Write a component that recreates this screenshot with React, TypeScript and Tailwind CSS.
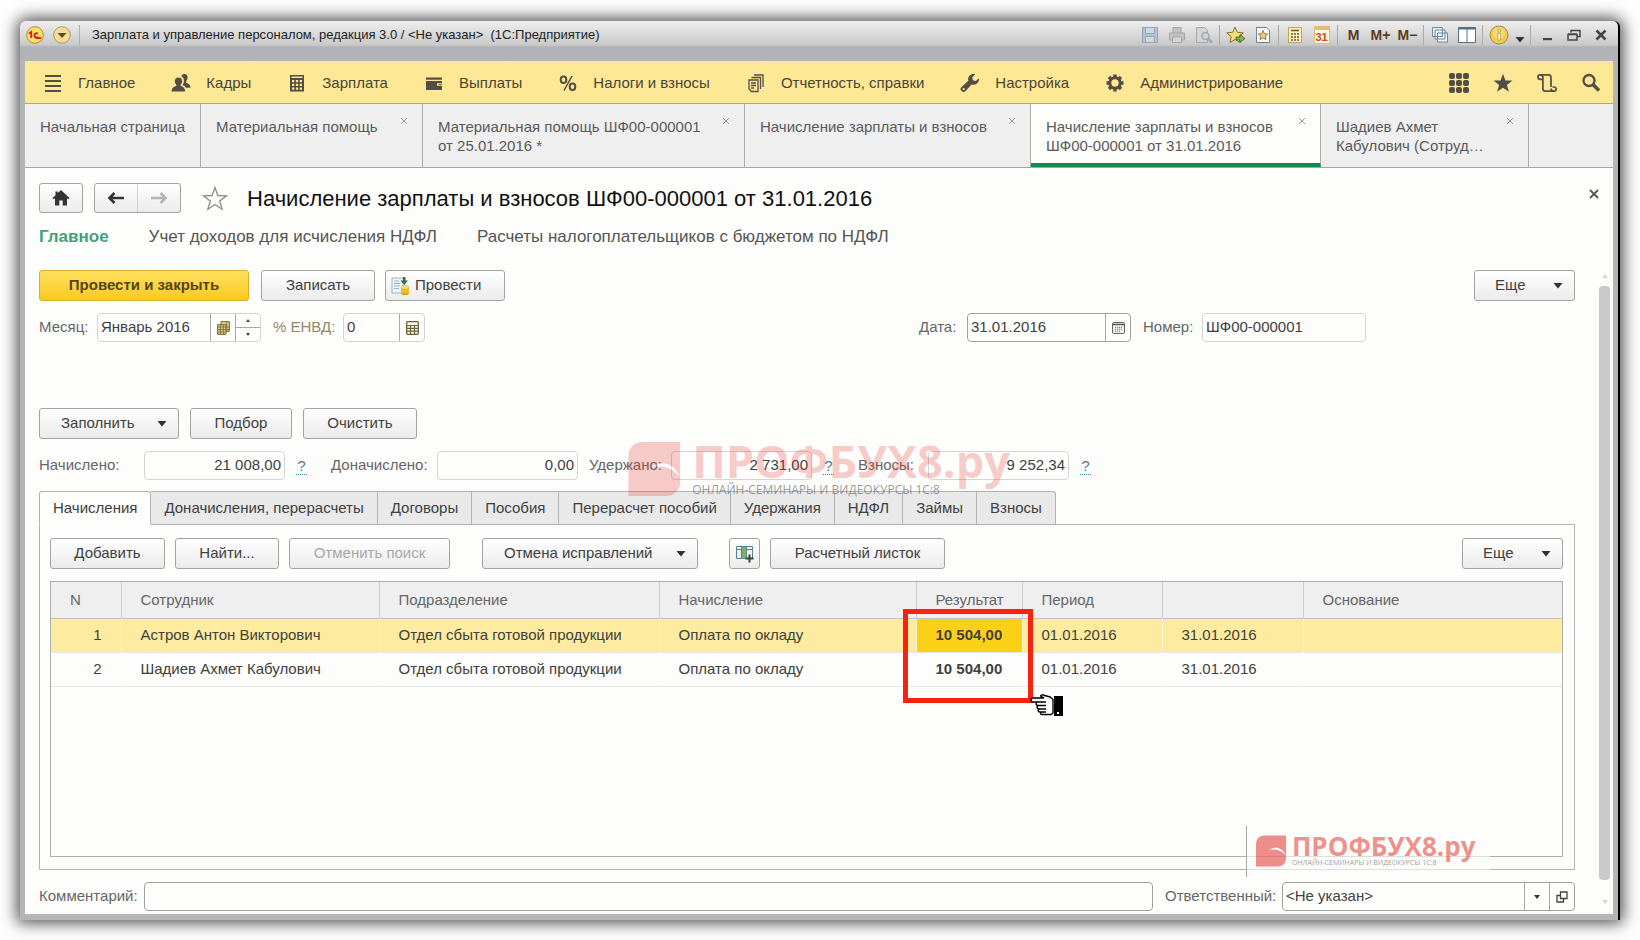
import type { ReactNode } from 'react';
import clsx from 'clsx';

const menu = [
  { label: 'Главное', icon: <MenuIcon /> },
  { label: 'Кадры', icon: <PeopleIcon /> },
  { label: 'Зарплата', icon: <CalculatorIcon /> },
  { label: 'Выплаты', icon: <WalletIcon /> },
  { label: 'Налоги и взносы', icon: <PercentIcon /> },
  { label: 'Отчетность, справки', icon: <ReportsIcon /> },
  { label: 'Настройка', icon: <WrenchIcon /> },
  { label: 'Администрирование', icon: <GearIcon /> },
];

const windows = [
  { lines: ['Начальная страница'], width: 'w-[176px]', closable: false },
  { lines: ['Материальная помощь'], width: 'w-[222px]', closable: true },
  { lines: ['Материальная помощь ШФ00-000001', 'от 25.01.2016 *'], width: 'w-[322px]', closable: true },
  { lines: ['Начисление зарплаты и взносов'], width: 'w-[286px]', closable: true },
  { lines: ['Начисление зарплаты и взносов', 'ШФ00-000001 от 31.01.2016'], width: 'w-[290px]', closable: true, active: true },
  { lines: ['Шадиев Ахмет', 'Кабулович (Сотруд…'], width: 'w-[208px]', closable: true },
];

const sections = [
  'Начисления',
  'Доначисления, перерасчеты',
  'Договоры',
  'Пособия',
  'Перерасчет пособий',
  'Удержания',
  'НДФЛ',
  'Займы',
  'Взносы',
];

const rows = [
  { n: 1, name: 'Астров Антон Викторович', result: '10 504,00' },
  { n: 2, name: 'Шадиев Ахмет Кабулович', result: '10 504,00' },
];

function MenuIcon() {
  return (
    <svg viewBox="0 0 20 20" className="size-5" fill="#544d44">
      <path d="M2 2h16v2H2zM2 7h16v2H2zM2 12h16v2H2zM2 17h16v2H2z" />
    </svg>
  );
}

function PeopleIcon() {
  return (
    <svg viewBox="0 0 20 20" className="size-5" fill="#544d44">
      <path d="M13.2 1c2.200 0 3.400 1.500 3.400 3.500 0 1.700-.8 3-1.500 3.800v1.500c1.800.7 4.400 1.500 4.400 4.900h-4.700c-.6-1.500-1.900-2.200-3.300-2.800 1.200-1.500 1.600-3.400 1.400-5.100-.2-1.600-1-2.700-2.600-3.300C10.900 1.700 11.900 1 13.2 1z" />
      <path d="M7.500 4.500c2.400 0 3.700 1.500 3.700 3.600 0 1.600-.8 3-1.600 3.800v1.200c1.900.8 4.500 1.400 4.500 5.400H.6c0-4 2.700-4.600 4.800-5.400v-1.200C4.600 11.100 3.800 9.700 3.800 8.100c0-2.100 1.300-3.600 3.700-3.600z" />
    </svg>
  );
}

function CalculatorIcon() {
  return (
    <svg viewBox="0 0 20 20" className="size-5">
      <path d="M3 2h14v16.500H3z" fill="#544d44" />
      <path d="M4.500 3.500h11V5h-11z" fill="#fde896" />
      <path d="M5 7h2.300v2.300H5zM8.900 7h2.300v2.300H8.900zM12.700 7H15v2.300h-2.300zM5 10.700h2.300V13H5zM8.900 10.700h2.300V13H8.900zM12.700 10.700H15V13h-2.300zM5 14.400h2.300v2.300H5zM8.900 14.400h2.300v2.300H8.900zM12.700 14.400H15v2.300h-2.300z" fill="#fde896" />
    </svg>
  );
}

function WalletIcon() {
  return (
    <svg viewBox="0 0 20 20" className="size-5" fill="#544d44">
      <path d="M2 4.500h16v2.200H2z" />
      <path d="M2 8h16v2.300h-5v2.400h5V17H2z" />
      <path d="M14.500 11.200H18v.7h-3.500z" />
    </svg>
  );
}

function PercentIcon() {
  return (
    <svg viewBox="0 0 20 20" className="size-5" fill="none" stroke="#544d44" strokeWidth="2">
      <ellipse cx="5.500" cy="6.800" rx="2.800" ry="3.200" />
      <ellipse cx="14.500" cy="13.800" rx="2.800" ry="3.200" />
      <path d="M14 3 6 17.500" strokeWidth="1.500" />
    </svg>
  );
}

function ReportsIcon() {
  return (
    <svg viewBox="0 0 20 20" className="size-5" fill="none" stroke="#544d44" strokeWidth="1.300">
      <path d="M3 7h9v11.500H5.500L3 16z" />
      <path d="M5.500 4.500h9V16M8 2h9v12" />
      <path d="M5 10h5M5 12.500h5M5 15h3" />
    </svg>
  );
}

function WrenchIcon() {
  return (
    <svg viewBox="0 0 20 20" className="size-5" fill="#544d44">
      <path d="M18.800 5.200 15.800 8l-2.900-.8-.7-2.900 2.900-2.900c-2-.7-4.300-.2-5.700 1.300-1.300 1.400-1.600 3.300-1 5L1.600 14a2.600 2.600 0 0 0 0 3.900 2.800 2.800 0 0 0 4 0l6-6.400c1.900.6 4 .2 5.500-1.200 1.500-1.300 2.200-3.200 1.700-5.100zM3.700 17.200a1.100 1.100 0 1 1 0-2.200 1.100 1.100 0 0 1 0 2.200z" />
    </svg>
  );
}

function GearIcon() {
  return (
    <svg viewBox="0 0 20 20" className="size-5" fill="none" stroke="#544d44">
      <circle cx="10" cy="10" r="5.200" strokeWidth="3" />
      <path d="M10 1.500v3M10 15.500v3M1.500 10h3M15.500 10h3M4 4l2 2M14 14l2 2M4 16l2-2M14 6l2-2" strokeWidth="3.400" />
    </svg>
  );
}

function HomeIcon() {
  return (
    <svg viewBox="0 0 18 16" className="h-4 w-[18px]" fill="#333">
      <path d="M9 0 17.500 8l-1.300 1.200L15 8.200V15.500h-4.300v-5H7.300v5H3V8.200L1.800 9.200.5 8 3.500 5.200V1.500h2.300v1.600z" />
    </svg>
  );
}

function ArrowIcon({ flip, color }: { flip?: boolean; color: string }) {
  return (
    <svg viewBox="0 0 18 14" className={clsx('h-3.5 w-[18px]', flip && 'rotate-180')} fill="none" stroke={color} strokeWidth="2.600">
      <path d="M17 7H3M7.500 2l-5 5 5 5" />
    </svg>
  );
}

function Caret() {
  return (
    <svg viewBox="0 0 10 6" className="h-1.5 w-2.5" fill="#333">
      <path d="M.5 0h9L5 5.500z" />
    </svg>
  );
}

function MiniCalc() {
  return (
    <svg viewBox="0 0 13 14" className="h-3.5 w-[13px]">
      <rect x=".7" y=".7" width="11.600" height="12.600" rx="1" fill="#fffbe8" stroke="#6b6038" strokeWidth="1.300" />
      <path d="M1 4.500h11M4.500 4.500V13M8.500 4.500V13M1 7.300h11M1 10.200h11" stroke="#6b6038" strokeWidth="1.200" />
    </svg>
  );
}

function MonthIcon() {
  return (
    <svg viewBox="0 0 13 14" className="h-3.5 w-[13px]">
      <path d="M4 .6h8.400v9.800H4z" fill="#e2d28b" stroke="#7b6c34" />
      <path d="M.6 3.600H9v9.800H.6z" fill="#e2d28b" stroke="#7b6c34" />
      <path d="M.6 6h11.800M.6 8.500h11.800M.6 11H9M3.400 3.600v9.800M6.200 3.600v9.800M9.800.6v9.800" stroke="#7b6c34" strokeWidth=".9" />
    </svg>
  );
}

function CalendarIcon() {
  return (
    <svg viewBox="0 0 13 12" className="h-3 w-[13px]" fill="none" stroke="#555">
      <rect x=".6" y=".6" width="11.800" height="10.800" rx="1" />
      <path d="M.6 2.500h11.800" strokeWidth="1.500" />
      <path d="M3 5.200h7M3 7.200h7M3 9.200h5" strokeDasharray="1.200 .8" />
    </svg>
  );
}

function PostIcon() {
  return (
    <svg viewBox="0 0 19 20" className="h-5 w-[19px]">
      <path d="M1 2h11v15H1z" fill="#eef6fc" stroke="#9db3c4" />
      <path d="M3 5h5M3 7.500h6M3 10h6M3 12.500h5" stroke="#9db3c4" />
      <ellipse cx="14" cy="17" rx="4" ry="2" fill="#dfa50e" />
      <path d="M10 11.500h8V17h-8z" fill="#f0bd25" />
      <ellipse cx="14" cy="11.500" rx="4" ry="1.800" fill="#fbe07a" stroke="#dfa50e" strokeWidth=".6" />
      <path d="M12 1v3.500H9.500L13.300 9l3.700-4.500h-2.500V1z" fill="#3b6b46" />
    </svg>
  );
}

function AddColumnIcon() {
  return (
    <svg viewBox="0 0 20 20" className="size-5">
      <path d="M1.500 2.500h16v12h-16z" fill="#e9f1f7" stroke="#5d7f95" />
      <path d="M1.500 5.500h16M6.500 2.500v12M11.500 2.500v12" stroke="#5d7f95" />
      <path d="M7 3h4.200v11.500H7z" fill="#79b26c" />
      <path d="M14.500 10.500v8M10.500 14.500h8" stroke="#2c4b2f" strokeWidth="2" />
    </svg>
  );
}

function Separator() {
  return <span className="mx-0.5 h-5 w-px shrink-0 bg-[#a9a9a9]" />;
}

function ToolButton({ label, children }: { label: string; children: ReactNode }) {
  return (
    <button aria-label={label} className="flex h-6 w-[27px] shrink-0 items-center justify-center">
      {children}
    </button>
  );
}

function TitleTools() {
  return (
    <div className="flex items-center pr-1 text-sm font-bold text-[#5b3a1c]">
      <ToolButton label="Сохранить">
        <svg viewBox="0 0 18 18" className="size-[18px]" fill="none" stroke="#93a5b5">
          <path d="M1.500 1.500h15v15h-15z" fill="#b4c3cf" />
          <path d="M4.500 1.500h9v6h-9zM4.500 10.500h9v6h-9z" fill="#cfd8df" />
        </svg>
      </ToolButton>
      <ToolButton label="Печать">
        <svg viewBox="0 0 18 18" className="size-[18px]" fill="#c3c3c3" stroke="#a5a5a5">
          <path d="M5 7V1.500h8V7M1.500 7h15v7h-15z" />
          <path d="M4.500 11h9v5.500h-9z" fill="#d6d6d6" />
        </svg>
      </ToolButton>
      <ToolButton label="Просмотр">
        <svg viewBox="0 0 18 18" className="size-[18px]" fill="#d4d4d4" stroke="#a5a8ab">
          <path d="M1.500 1.500h8l3 3v12h-11z" />
          <circle cx="10.500" cy="10" r="3.500" fill="#c9d6df" strokeWidth="1.500" />
          <path d="m13 12.500 4 4" strokeWidth="2.500" />
        </svg>
      </ToolButton>
      <Separator />
      <ToolButton label="В избранное">
        <svg viewBox="0 0 20 18" className="h-[18px] w-5">
          <path d="m9 1 2.300 5.300 6 .5-4.500 3.900 1.300 5.800L9 13.500l-5.100 3 1.300-5.800L.7 6.800l6-.5z" fill="#f5dc7c" stroke="#8a7327" />
          <path d="M10 11h4V8.500l5 4-5 4V14h-4z" fill="#7fb24a" stroke="#3f6a1c" strokeWidth=".8" />
        </svg>
      </ToolButton>
      <ToolButton label="Избранное">
        <svg viewBox="0 0 16 18" className="h-[18px] w-4">
          <path d="M1.500 1.500h10l3 3v12h-13z" fill="#f8fbfd" stroke="#6e8496" />
          <path d="m8 4.500 1.400 3.200 3.400.3-2.600 2.200.8 3.400L8 11.800l-3 1.800.8-3.400L3.200 8l3.400-.3z" fill="#f1d26a" stroke="#76652c" strokeWidth=".8" />
        </svg>
      </ToolButton>
      <Separator />
      <ToolButton label="Калькулятор">
        <svg viewBox="0 0 16 18" className="h-[18px] w-4">
          <path d="M1.500 1.500h13v15h-13z" fill="#fdf0bd" stroke="#c9a350" />
          <path d="M4 4.500h8" stroke="#6a5930" strokeWidth="1.500" />
          <path d="M4 8h8M4 11h8M4 14h8" stroke="#6a5930" strokeWidth="1.500" strokeDasharray="2 1" />
        </svg>
      </ToolButton>
      <ToolButton label="Календарь">
        <span className="flex h-[18px] w-4 items-end justify-center border border-t-4 border-[#e0bd72] bg-[#fff8dc] text-[11px] leading-3 text-[#d3432a]">
          31
        </span>
      </ToolButton>
      <Separator />
      <ToolButton label="Память">M</ToolButton>
      <ToolButton label="Прибавить к памяти">M+</ToolButton>
      <ToolButton label="Вычесть из памяти">M−</ToolButton>
      <Separator />
      <ToolButton label="Окна">
        <svg viewBox="0 0 18 18" className="size-[18px]" fill="#eef4f9" stroke="#6e889c">
          <path d="M1.500 1.500h10v9h-10zM4 4h10v9H4zM6.500 7h10v9h-10z" />
        </svg>
      </ToolButton>
      <ToolButton label="Разделить окно">
        <svg viewBox="0 0 20 18" className="h-[18px] w-5" fill="#fff" stroke="#557188">
          <path d="M1.500 1.500h17v15h-17zM10 1.500v15" />
          <path d="M1.500 2.500h17" strokeWidth="2" />
        </svg>
      </ToolButton>
      <Separator />
      <ToolButton label="Справка">
        <svg viewBox="0 0 20 20" className="size-5">
          <circle cx="10" cy="10" r="9" fill="#f0cb4c" stroke="#a98732" />
          <circle cx="10" cy="8" r="6" fill="#fae389" opacity=".6" />
          <path d="M9 8.500h2.400V15H9zM9 4.500h2.400v2.400H9z" fill="#fff" stroke="#8d7024" strokeWidth=".5" />
        </svg>
      </ToolButton>
      <button aria-label="Еще" className="flex h-6 w-4 items-end justify-center pb-1">
        <Caret />
      </button>
      <Separator />
      <ToolButton label="Свернуть">
        <svg viewBox="0 0 12 12" className="size-3" fill="#444">
          <path d="M2 9h9v2.200H2z" />
        </svg>
      </ToolButton>
      <ToolButton label="Развернуть">
        <svg viewBox="0 0 14 12" className="h-3 w-3.5" fill="none" stroke="#444" strokeWidth="1.500">
          <path d="M4 3.500v-2h9v6h-3" />
          <path d="M1 5.500h9V11H1zM1 5h9" />
        </svg>
      </ToolButton>
      <ToolButton label="Закрыть">
        <svg viewBox="0 0 12 12" className="size-3" stroke="#444" strokeWidth="2.600">
          <path d="m1.500 1.500 9 9M10.500 1.500l-9 9" />
        </svg>
      </ToolButton>
    </div>
  );
}

function TitleBar() {
  return (
    <header className="flex h-10 items-start justify-between rounded-t-md bg-linear-to-b from-[#eeeeee] from-0% via-[#c9c9c9] via-60% to-[#b2b3b6] to-65% pt-0.5 pl-1.5">
      <div className="flex h-6 items-center">
        <svg viewBox="0 0 18 18" className="size-[18px]">
          <circle cx="9" cy="9" r="8.300" fill="#fbe06a" stroke="#b48b2c" />
          <path d="M3 7.500 5.200 6v6M12 7.700a2.200 2.200 0 1 0 .2 3.300M9.500 12h5.500" fill="none" stroke="#d8251c" strokeWidth="1.900" />
        </svg>
        <button aria-label="Главное меню" className="ml-[9px]">
          <svg viewBox="0 0 18 18" className="size-[18px]">
            <circle cx="9" cy="9" r="8.300" fill="#f3dc98" stroke="#b09a5c" />
            <path d="M4.500 7h9L9 12z" fill="#5c4d28" />
          </svg>
        </button>
        <span className="mr-3 ml-2 h-5 w-px bg-[#b0b0b0]" />
        <span className="text-[13px] whitespace-pre text-[#222]">
          Зарплата и управление персоналом, редакция 3.0 / &lt;Не указан&gt;  (1С:Предприятие)
        </span>
      </div>
      <TitleTools />
    </header>
  );
}

function MainMenu() {
  return (
    <nav className="flex h-[43px] items-center justify-between border-b border-[#b9a968] bg-[#fde896] pt-0.5 pr-3 pl-[18px]">
      <ul className="flex items-center gap-9">
        {menu.map((item) => (
          <li key={item.label}>
            <a href="#" className="flex items-center gap-[15px] text-[15px] whitespace-nowrap text-[#4a4438]">
              {item.icon}
              {item.label}
            </a>
          </li>
        ))}
      </ul>
      <div className="flex items-center gap-6">
        <button aria-label="Все функции">
          <svg viewBox="0 0 20 20" className="size-5" fill="#544d44">
            {[3, 10, 17].map((y) =>
              [3, 10, 17].map((x) => <rect key={`${x}-${y}`} x={x - 3} y={y - 3} width="6" height="6" rx="2" />),
            )}
          </svg>
        </button>
        <button aria-label="Избранное">
          <svg viewBox="0 0 20 20" className="size-5" fill="#544d44">
            <path d="m10 .8 2.400 6.600 7.100.2-5.600 4.300 2 6.800L10 14.700l-5.900 4 2-6.800L.5 7.600l7.100-.2z" />
          </svg>
        </button>
        <button aria-label="История">
          <svg viewBox="0 0 20 20" className="size-5" fill="none" stroke="#544d44" strokeWidth="1.700">
            <path d="M5.500 6.300H3.200a2.200 2.200 0 0 1 0-4.500h8.300a2.500 2.500 0 0 1 2.500 2.500V14" />
            <path d="M3.300 1.800c1.500 0 2.600 1 2.600 2.600V15.500a2.700 2.700 0 0 0 2.700 2.700H17" />
            <path d="M15.500 14h1.600a2.100 2.100 0 0 1 0 4.200c-1.800 0-3.100-1-3.100-2.700" />
          </svg>
        </button>
        <button aria-label="Поиск">
          <svg viewBox="0 0 20 20" className="size-5" fill="none" stroke="#544d44">
            <circle cx="8" cy="7.500" r="5.500" strokeWidth="2.300" />
            <path d="m12 11.500 6 6" strokeWidth="3.600" />
          </svg>
        </button>
      </div>
    </nav>
  );
}

function WindowTabs() {
  return (
    <div className="flex h-16 border-b border-[#a6a6a6] bg-[#efefef]">
      {windows.map((tab, i) => (
        <div
          key={i}
          className={clsx(
            'flex shrink-0 justify-between border-r border-[#ababab] pt-[13px] pr-3.5 pl-[15px] text-[15px] leading-[19px] text-[#5a5a5a]',
            tab.width,
            tab.active && 'border-b-4 border-b-[#15894e] bg-[#fdfdfb]',
          )}
        >
          <a href="#" className="whitespace-nowrap">
            {tab.lines.map((line) => (
              <span key={line} className="block">{line}</span>
            ))}
          </a>
          {tab.closable && (
            <button aria-label="Закрыть вкладку" className="h-2">
              <svg viewBox="0 0 8 8" className="size-2" stroke="#9a9a9a">
                <path d="m1 1 6 6M7 1 1 7" />
              </svg>
            </button>
          )}
        </div>
      ))}
    </div>
  );
}

function Button({ children, className, disabled }: { children: ReactNode; className?: string; disabled?: boolean }) {
  return (
    <button
      disabled={disabled}
      className={clsx(
        'flex h-[31px] shrink-0 items-center justify-center rounded-[3px] border border-[#a3a3a3] bg-linear-to-b from-white to-[#ebebeb] text-[15px] whitespace-nowrap',
        disabled ? 'text-[#a8a8a8]' : 'text-[#404040]',
        className,
      )}
    >
      {children}
    </button>
  );
}

function MenuButton({ label, className }: { label: string; className: string }) {
  return (
    <Button className={clsx('justify-between! pr-[11px]', className)}>
      {label}
      <Caret />
    </Button>
  );
}

function TextField({
  id,
  value,
  className,
  inputClass,
  strong,
  children,
}: {
  id: string;
  value: string;
  className: string;
  inputClass?: string;
  strong?: boolean;
  children?: ReactNode;
}) {
  return (
    <div
      className={clsx(
        'flex h-[29px] items-stretch rounded-[4px] border bg-[#fefefd]',
        strong ? 'border-[#a0a0a0]' : 'border-[#d4d4d4]',
        className,
      )}
    >
      <input
        id={id}
        defaultValue={value}
        className={clsx('w-full min-w-0 flex-1 bg-transparent px-[3px] text-[15px] text-[#404040] outline-none', inputClass)}
      />
      {children}
    </div>
  );
}

function FieldButton({ label, children }: { label: string; children: ReactNode }) {
  return (
    <button aria-label={label} className="flex w-[25px] shrink-0 items-center justify-center border-l border-[#a8a8a8]">
      {children}
    </button>
  );
}

function Hint() {
  return (
    <a href="#" className="ml-[11px] w-[11px] border-b border-dotted border-[#3c83a8] text-center text-[15px] leading-[17px] text-[#3c83a8]">
      ?
    </a>
  );
}

function DocumentHeader() {
  return (
    <div className="px-3.5 pt-[15px]">
      <div className="flex h-[30px] items-center">
        <Button className="h-[30px]! w-11">
          <HomeIcon />
        </Button>
        <div className="ml-[11px] flex h-[30px] w-[87px] rounded-[3px] border border-[#a3a3a3] bg-linear-to-b from-white to-[#ebebeb]">
          <button aria-label="Назад" className="flex flex-1 items-center justify-center border-r border-[#d0d0d0]">
            <ArrowIcon color="#333" />
          </button>
          <button aria-label="Вперед" className="flex flex-1 items-center justify-center">
            <ArrowIcon color="#b5b5b5" flip />
          </button>
        </div>
        <button aria-label="Добавить в избранное" className="ml-[21px]">
          <svg viewBox="0 0 26 25" className="h-[25px] w-[26px]" fill="none" stroke="#8d8d8d" strokeWidth="1.300">
            <path d="m13 1.500 2.900 8 8.600.3-6.800 5.200 2.400 8.300L13 18.500l-7.100 4.800L8.300 15 1.500 9.800l8.600-.3z" />
          </svg>
        </button>
        <h1 className="ml-[19px] text-[22px] text-[#111]">Начисление зарплаты и взносов ШФ00-000001 от 31.01.2016</h1>
        <button aria-label="Закрыть" className="ml-auto self-start pt-1.5">
          <svg viewBox="0 0 10 10" className="size-2.5" stroke="#555" strokeWidth="1.800">
            <path d="m1 1 8 8M9 1 1 9" />
          </svg>
        </button>
      </div>
      <nav className="mt-3.5 flex gap-10 text-[17px] leading-5 text-[#555]">
        <a href="#" className="font-bold text-[#45a07c]">Главное</a>
        <a href="#">Учет доходов для исчисления НДФЛ</a>
        <a href="#">Расчеты налогоплательщиков с бюджетом по НДФЛ</a>
      </nav>
    </div>
  );
}

function Totals() {
  return (
    <div className="mt-3 flex items-center text-[15px] text-[#666]">
      <label htmlFor="accrued" className="w-[105px]">Начислено:</label>
      <TextField id="accrued" value="21 008,00" className="w-[141px]" inputClass="text-right" />
      <Hint />
      <label htmlFor="extra" className="ml-6 w-[106px]">Доначислено:</label>
      <TextField id="extra" value="0,00" className="w-[141px]" inputClass="text-right" />
      <label htmlFor="withheld" className="ml-[11px] w-[82px]">Удержано:</label>
      <TextField id="withheld" value="2 731,00" className="w-[141px]" inputClass="text-right" />
      <Hint />
      <label htmlFor="contributions" className="ml-6 w-[70px]">Взносы:</label>
      <TextField id="contributions" value="9 252,34" className="w-[141px]" inputClass="text-right" />
      <Hint />
    </div>
  );
}

function SectionTabs() {
  return (
    <div role="tablist" className="flex h-[33px]">
      {sections.map((name, i) => (
        <button
          key={name}
          role="tab"
          aria-selected={i === 0}
          className={clsx(
            'relative -mb-px border-y border-r border-[#b3b3b3] px-[13px] text-[15px] whitespace-nowrap text-[#404040]',
            i === 0 ? 'z-10 rounded-t-[3px] border-l border-b-[#fdfdfb] bg-[#fdfdfb]' : 'bg-[#e9e9e9]',
            i === sections.length - 1 && 'rounded-tr-[3px]',
          )}
        >
          {name}
        </button>
      ))}
    </div>
  );
}

function AccrualsTable() {
  return (
    <table className="w-full table-fixed border-collapse text-left text-[15px] text-[#404040]">
      <colgroup>
        <col className="w-[70px]" />
        <col className="w-[258px]" />
        <col className="w-[280px]" />
        <col className="w-[257px]" />
        <col className="w-[106px]" />
        <col className="w-[140px]" />
        <col className="w-[141px]" />
        <col />
      </colgroup>
      <thead>
        <tr className="h-9 border-b border-[#c2c2c2] bg-[#efefef] text-[#666]">
          {['N', 'Сотрудник', 'Подразделение', 'Начисление', 'Результат', 'Период', '', 'Основание'].map((title, i) => (
            <th key={i} className="border-r border-[#cccccc] pl-[19px] font-normal last:border-r-0">{title}</th>
          ))}
        </tr>
      </thead>
      <tbody>
        {rows.map((row) => (
          <tr
            key={row.n}
            className={clsx(
              'h-[34px] border-b border-[#e6e6e6] [&>td]:border-r [&>td]:pl-[19px] [&>td:last-child]:border-r-0',
              row.n === 1 ? 'bg-[#fdeb9f] [&>td]:border-r-[#fbf5d8]' : '[&>td]:border-r-transparent',
            )}
          >
            <td className="pr-[19px] text-right">{row.n}</td>
            <td>{row.name}</td>
            <td>Отдел сбыта готовой продукции</td>
            <td>Оплата по окладу</td>
            <td className={clsx('relative font-bold whitespace-nowrap', row.n === 1 && 'bg-[#fbd117]')}>
              {row.result}
              {row.n === 1 && <Callout />}
            </td>
            <td>01.01.2016</td>
            <td>31.01.2016</td>
            <td />
          </tr>
        ))}
      </tbody>
    </table>
  );
}

// red frame around both results, with the hand pointing at its corner
function Callout() {
  return (
    <span className="pointer-events-none absolute -top-2.5 -left-3.5 z-10 h-[94px] w-[130px] border-[5px] border-[#f9220f]">
      <svg viewBox="0 0 34 22" className="absolute -right-[36px] -bottom-[18px] h-[22px] w-[34px]">
        <path d="M1 5.500C1 4 3 4 3 4h11l-3-1.500C10 1 12 .7 13 1l7 2 3 2.500V19l-2 1.500h-9c-2 0-2-2.500 0-2.500h-2c-2.500 0-2.500-3 0-3H9c-2.500 0-2.500-3.500 0-3.500H8C5.500 11.500 5.500 8 8 8H3C1.500 8 1 7 1 5.500z" fill="#fff" stroke="#000" strokeWidth="1.400" />
        <path d="M8 8h8M9 11.500h7M10 15h6M12 18h4" stroke="#000" strokeWidth="1.300" />
        <path d="M24 2h9v20h-9z" />
        <path d="M27 18h2v2h-2z" fill="#fff" />
      </svg>
    </span>
  );
}

function LogoMark({ className }: { className: string }) {
  return (
    <svg viewBox="0 0 52 54" className={className}>
      <path d="M14 0h38v40a14 14 0 0 1-14 14H0V14A14 14 0 0 1 14 0z" fill="#e2352f" />
      <path d="M23 25c10-7 23-4 28 9-7-8-16-11-28-9z" fill="#fff" />
    </svg>
  );
}

function App() {
  return (
    <div className="flex min-h-screen bg-[#fefefe] px-5 pt-[21px] pb-5 font-['Liberation_Sans',Arial,sans-serif]">
      <div className="relative flex min-w-0 flex-1 flex-col rounded-t-md border-r-2 border-black bg-[#b5b5b5] shadow-[0_0_16px_3px_rgba(0,0,0,0.7)]">
        <TitleBar />
        <div className="mr-[5px] mb-[6px] ml-[5px] flex flex-1 flex-col bg-[#fdfdfb]">
          <MainMenu />
          <WindowTabs />
          <DocumentHeader />

          <div className="flex flex-1 pt-[23px] pr-[3px] pl-3.5">
            <main className="flex min-w-0 flex-1 flex-col pb-[3px]">
              <div className="flex">
                <button className="h-[31px] w-[210px] rounded-[3px] border border-[#dcae22] bg-linear-to-b from-[#ffe05c] to-[#fbc916] text-[15px] font-bold text-[#55451a]">
                  Провести и закрыть
                </button>
                <Button className="ml-3 w-[114px]">Записать</Button>
                <Button className="ml-2.5 w-[120px] justify-start! gap-[5px] pl-[5px]">
                  <PostIcon />
                  Провести
                </Button>
                <MenuButton label="Еще" className="ml-auto w-[101px] pl-5" />
              </div>

              <div className="mt-3 flex items-center text-[15px] text-[#666]">
                <label htmlFor="month" className="w-[58px]">Месяц:</label>
                <TextField id="month" value="Январь 2016" className="w-[164px]">
                  <FieldButton label="Выбрать месяц">
                    <MonthIcon />
                  </FieldButton>
                  <div className="flex w-[25px] flex-col border-l border-[#a8a8a8]">
                    <button aria-label="Следующий месяц" className="flex flex-1 items-center justify-center border-b border-[#a8a8a8]">
                      <svg viewBox="0 0 4 3" className="h-[3px] w-1" fill="#444"><path d="M0 3h4L2 0z" /></svg>
                    </button>
                    <button aria-label="Предыдущий месяц" className="flex flex-1 items-center justify-center">
                      <svg viewBox="0 0 4 3" className="h-[3px] w-1" fill="#444"><path d="M0 0h4L2 3z" /></svg>
                    </button>
                  </div>
                </TextField>
                <label htmlFor="envd" className="ml-3 w-[70px] whitespace-nowrap text-[#94876a]">% ЕНВД:</label>
                <TextField id="envd" value="0" className="w-[82px]">
                  <FieldButton label="Калькулятор">
                    <MiniCalc />
                  </FieldButton>
                </TextField>

                <label htmlFor="date" className="ml-auto w-12">Дата:</label>
                <TextField id="date" value="31.01.2016" className="w-[164px]" strong>
                  <FieldButton label="Календарь">
                    <CalendarIcon />
                  </FieldButton>
                </TextField>
                <label htmlFor="number" className="ml-3 w-[59px]">Номер:</label>
                <TextField id="number" value="ШФ00-000001" className="mr-[209px] w-[164px]" />
              </div>

              <div className="mt-[66px] flex gap-[11px]">
                <MenuButton label="Заполнить" className="w-[140px] pl-[21px]" />
                <Button className="w-[102px]">Подбор</Button>
                <Button className="w-[114px]">Очистить</Button>
              </div>

              <Totals />

              <div className="mt-[11px] flex flex-1 flex-col">
                <SectionTabs />
                <section className="flex flex-1 flex-col border border-[#b3b3b3] pt-[13px] pr-[11px] pb-3 pl-2.5">
                  <div className="flex">
                    <Button className="w-[115px]">Добавить</Button>
                    <Button className="ml-2.5 w-[104px]">Найти...</Button>
                    <Button className="ml-2.5 w-[161px]" disabled>Отменить поиск</Button>
                    <MenuButton label="Отмена исправлений" className="ml-8 w-[216px] pl-[21px]" />
                    <Button className="ml-[31px] w-[31px]">
                      <AddColumnIcon />
                    </Button>
                    <Button className="ml-2.5 w-[175px]">Расчетный листок</Button>
                    <MenuButton label="Еще" className="ml-auto w-[101px] pl-5" />
                  </div>
                  <div className="mt-3 flex-1 border border-[#adadad]">
                    <AccrualsTable />
                  </div>
                </section>
              </div>

              <div className="mt-3 flex items-center text-[15px] text-[#666]">
                <label htmlFor="comment" className="w-[105px] shrink-0">Комментарий:</label>
                <TextField id="comment" value="" className="flex-1" strong />
                <label htmlFor="owner" className="ml-3 w-[117px]">Ответственный:</label>
                <TextField id="owner" value="<Не указан>" className="w-[293px]" strong>
                  <FieldButton label="Выбрать">
                    <svg viewBox="0 0 6 4" className="h-1 w-1.5" fill="#333"><path d="M0 0h6L3 4z" /></svg>
                  </FieldButton>
                  <FieldButton label="Открыть">
                    <svg viewBox="0 0 12 12" className="size-3" fill="none" stroke="#444" strokeWidth="1.300">
                      <path d="M4.500 1h6.500v6.500H4.500z" />
                      <path d="M4.500 4.500H1V11h6.500V7.500" />
                    </svg>
                  </FieldButton>
                </TextField>
              </div>
            </main>

            <div className="ml-6 flex w-[11px] flex-col items-center pt-1 pb-2.5">
              <svg viewBox="0 0 6 4" className="h-1 w-1.5" fill="#d6d6d6"><path d="M0 4h6L3 0z" /></svg>
              <div className="mt-2 mb-5 w-full flex-1 rounded-[4px] bg-[#c9c9c9]" />
              <svg viewBox="0 0 6 4" className="h-1 w-1.5" fill="#d6d6d6"><path d="M0 0h6L3 4z" /></svg>
            </div>
          </div>
        </div>

        <div className="pointer-events-none absolute top-[421px] left-1/2 z-20 flex -translate-x-1/2 gap-3 font-['Open_Sans',sans-serif] whitespace-nowrap">
          <LogoMark className="h-[54px] w-[52px] opacity-25" />
          <div>
            <p className="text-[45px] leading-[38px] font-bold text-[#e2352f]/25">ПРОФБУХ8.ру</p>
            <p className="mt-1 text-[12px] leading-3 text-[#555]/60">ОНЛАЙН-СЕМИНАРЫ И ВИДЕОКУРСЫ 1С:8</p>
          </div>
        </div>

        <div className="pointer-events-none absolute right-[128px] bottom-[43px] z-20 flex h-[51px] w-[244px] gap-1.5 border-l border-[#a8a8a8] bg-[#fdfdfb]/60 pt-[9px] pl-[9px] font-['Open_Sans',sans-serif] whitespace-nowrap">
          <LogoMark className="h-8 w-[30px] opacity-55" />
          <div>
            <p className="text-[26px] leading-[22px] font-bold text-[#e2352f]/55">ПРОФБУХ8.ру</p>
            <p className="mt-px text-[7px] leading-[10px] text-[#555]/60">ОНЛАЙН-СЕМИНАРЫ И ВИДЕОКУРСЫ 1С:8</p>
          </div>
        </div>
      </div>
    </div>
  );
}

export default App;
